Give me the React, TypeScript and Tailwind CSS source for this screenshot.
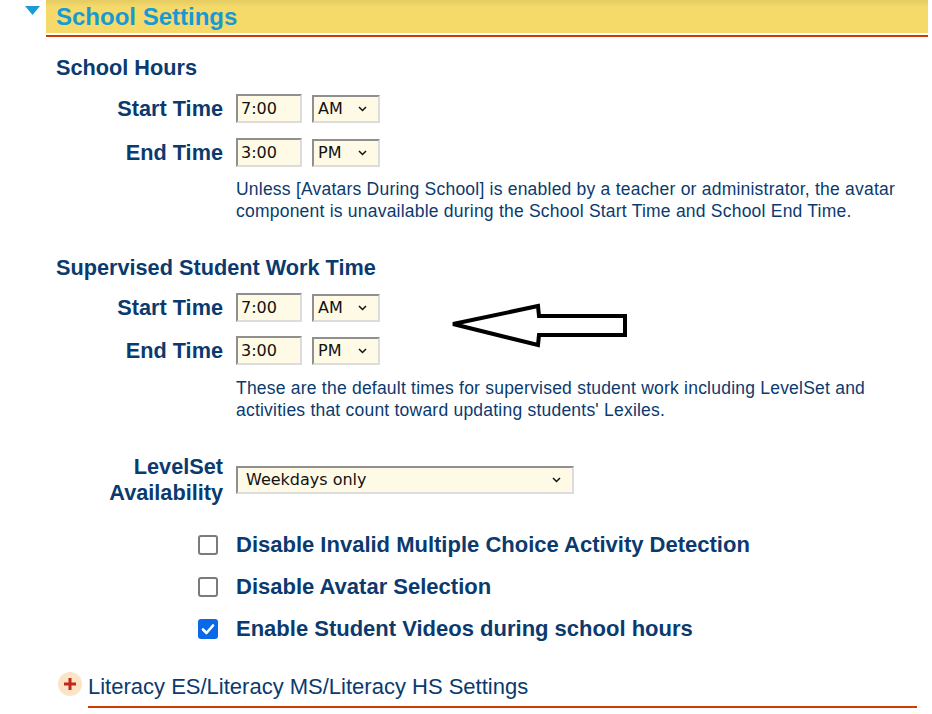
import React from "react";

const NAVY = "text-[#0b3a6e]";

function Chevron() {
  return (
    <svg width="9" height="6" viewBox="0 0 9 6" className="shrink-0">
      <path d="M1 1 L4.5 4.5 L8 1" fill="none" stroke="#111" strokeWidth="1.5" />
    </svg>
  );
}

function TimeInput({ value }: { value: string }) {
  return (
    <div className="w-[66px] h-[29px] flex items-center pl-[3px] border-2 border-t-[#8f8f8f] border-l-[#8f8f8f] border-r-[#dcdcdc] border-b-[#dcdcdc] bg-[#fffae6] font-['DejaVu_Sans',Verdana,sans-serif] text-[16px] text-[#111]">
      {value}
    </div>
  );
}

function AmPm({ value }: { value: string }) {
  return (
    <div className="w-[68px] h-[28px] flex items-center justify-between pl-[4px] pr-[11px] border-2 border-t-[#8f8f8f] border-l-[#8f8f8f] border-r-[#dcdcdc] border-b-[#dcdcdc] bg-[#fffae6] font-['DejaVu_Sans',Verdana,sans-serif] text-[16px] text-[#111]">
      <span>{value}</span>
      <Chevron />
    </div>
  );
}

function TimeRow({ label, time, ampm, className = "" }: { label: string; time: string; ampm: string; className?: string }) {
  return (
    <div className={`flex items-center ${className}`}>
      <div className="w-[167px] text-right font-bold text-[21.7px] leading-[26px]">{label}</div>
      <div className="ml-[13px] flex items-center gap-[10px]">
        <TimeInput value={time} />
        <AmPm value={ampm} />
      </div>
    </div>
  );
}

function Checkbox({ checked }: { checked?: boolean }) {
  if (checked) {
    return (
      <div className="w-[20px] h-[20px] rounded-[3px] bg-[#0b69e8] flex items-center justify-center">
        <svg width="14" height="12" viewBox="0 0 14 12">
          <path d="M2 6.5 L5.5 10 L12 2.5" fill="none" stroke="#fff" strokeWidth="2.6" strokeLinecap="round" strokeLinejoin="round" />
        </svg>
      </div>
    );
  }
  return <div className="w-[20px] h-[20px] rounded-[3px] border-2 border-[#7a7a7f] bg-white" />;
}

function CheckRow({ label, checked, className = "" }: { label: string; checked?: boolean; className?: string }) {
  return (
    <div className={`flex items-center h-[26px] ${className}`}>
      <div className="ml-[142px]">
        <Checkbox checked={checked} />
      </div>
      <div className="ml-[18px] font-bold text-[22px] leading-[26px]">{label}</div>
    </div>
  );
}

export default function App() {
  return (
    <div className={`relative w-[932px] h-[714px] overflow-hidden bg-white font-['Liberation_Sans',Arial,sans-serif] ${NAVY}`}>
      {/* Header */}
      <div className="flex items-start">
        <div className="w-[46px] shrink-0">
          <svg width="15" height="9" viewBox="0 0 15 9" className="ml-[25px] mt-[6px]">
            <path d="M0 0 L15 0 L7.5 9 Z" fill="#1a9ad6" />
          </svg>
        </div>
        <div className="w-[882px]">
          <div className="h-[33px] pl-[10px] bg-[linear-gradient(#e3cb62,#f5da6a_7px)] text-[#1799d4] font-bold text-[24px] leading-[33px]">
            School Settings
          </div>
          <div className="mt-[2px] h-[2px] bg-[#d03a06]" />
        </div>
      </div>

      {/* Content */}
      <div className="pl-[56px]">
        <div className="mt-[18px] font-bold text-[21.7px] leading-[26px]">School Hours</div>
        <TimeRow className="mt-[13px]" label="Start Time" time="7:00" ampm="AM" />
        <TimeRow className="mt-[15px]" label="End Time" time="3:00" ampm="PM" />
        <p className="mt-[11px] ml-[180px] text-[17.5px] tracking-[0.22px] leading-[22px] w-[690px]">
          Unless [Avatars During School] is enabled by a teacher or administrator, the avatar
          <br />
          component is unavailable during the School Start Time and School End Time.
        </p>

        <div className="mt-[33px] font-bold text-[21.7px] leading-[26px]">Supervised Student Work Time</div>
        <TimeRow className="mt-[12px]" label="Start Time" time="7:00" ampm="AM" />
        <TimeRow className="mt-[14px]" label="End Time" time="3:00" ampm="PM" />
        <p className="mt-[12px] ml-[180px] text-[17.5px] tracking-[0.22px] leading-[22px] w-[690px]">
          These are the default times for supervised student work including LevelSet and
          <br />
          activities that count toward updating students' Lexiles.
        </p>

        <div className="mt-[33px] flex items-center">
          <div className="w-[167px] text-right font-bold text-[21.7px] leading-[26px]">
            LevelSet
            <br />
            Availability
          </div>
          <div className="ml-[13px] w-[338px] h-[28px] flex items-center justify-between pl-[8px] pr-[11px] border-2 border-t-[#8f8f8f] border-l-[#8f8f8f] border-r-[#dcdcdc] border-b-[#dcdcdc] bg-[#fffae6] font-['DejaVu_Sans',Verdana,sans-serif] text-[16px] text-[#111]">
            <span>Weekdays only</span>
            <Chevron />
          </div>
        </div>

        <CheckRow className="mt-[26px]" label="Disable Invalid Multiple Choice Activity Detection" />
        <CheckRow className="mt-[16px]" label="Disable Avatar Selection" />
        <CheckRow className="mt-[16px]" label="Enable Student Videos during school hours" checked />

        <div className="mt-[32px] flex items-start">
          <div className="ml-[2px] -mt-[2px] w-[24px] h-[24px] rounded-full bg-[#fbe5c6] flex items-center justify-center">
            <svg width="14" height="14" viewBox="0 0 14 14">
              <path d="M7 1 V13 M1 7 H13" stroke="#c3261d" strokeWidth="3" />
            </svg>
          </div>
          <div className="ml-[6px] text-[22px] leading-[26px]">Literacy ES/Literacy MS/Literacy HS Settings</div>
        </div>
        <div className="mt-[6px] ml-[32px] w-[829px] h-[2px] bg-[#d03a06]" />
      </div>

      {/* Annotation arrow */}
      <svg className="absolute left-[440px] top-[296px]" width="200" height="60" viewBox="440 296 200 60">
        <path
          d="M453 324 L538 306 L539 316 L625 316 L625 335 L539 335 L538 345 Z"
          fill="none"
          stroke="#000"
          strokeWidth="4"
          strokeLinejoin="miter"
        />
      </svg>
    </div>
  );
}
